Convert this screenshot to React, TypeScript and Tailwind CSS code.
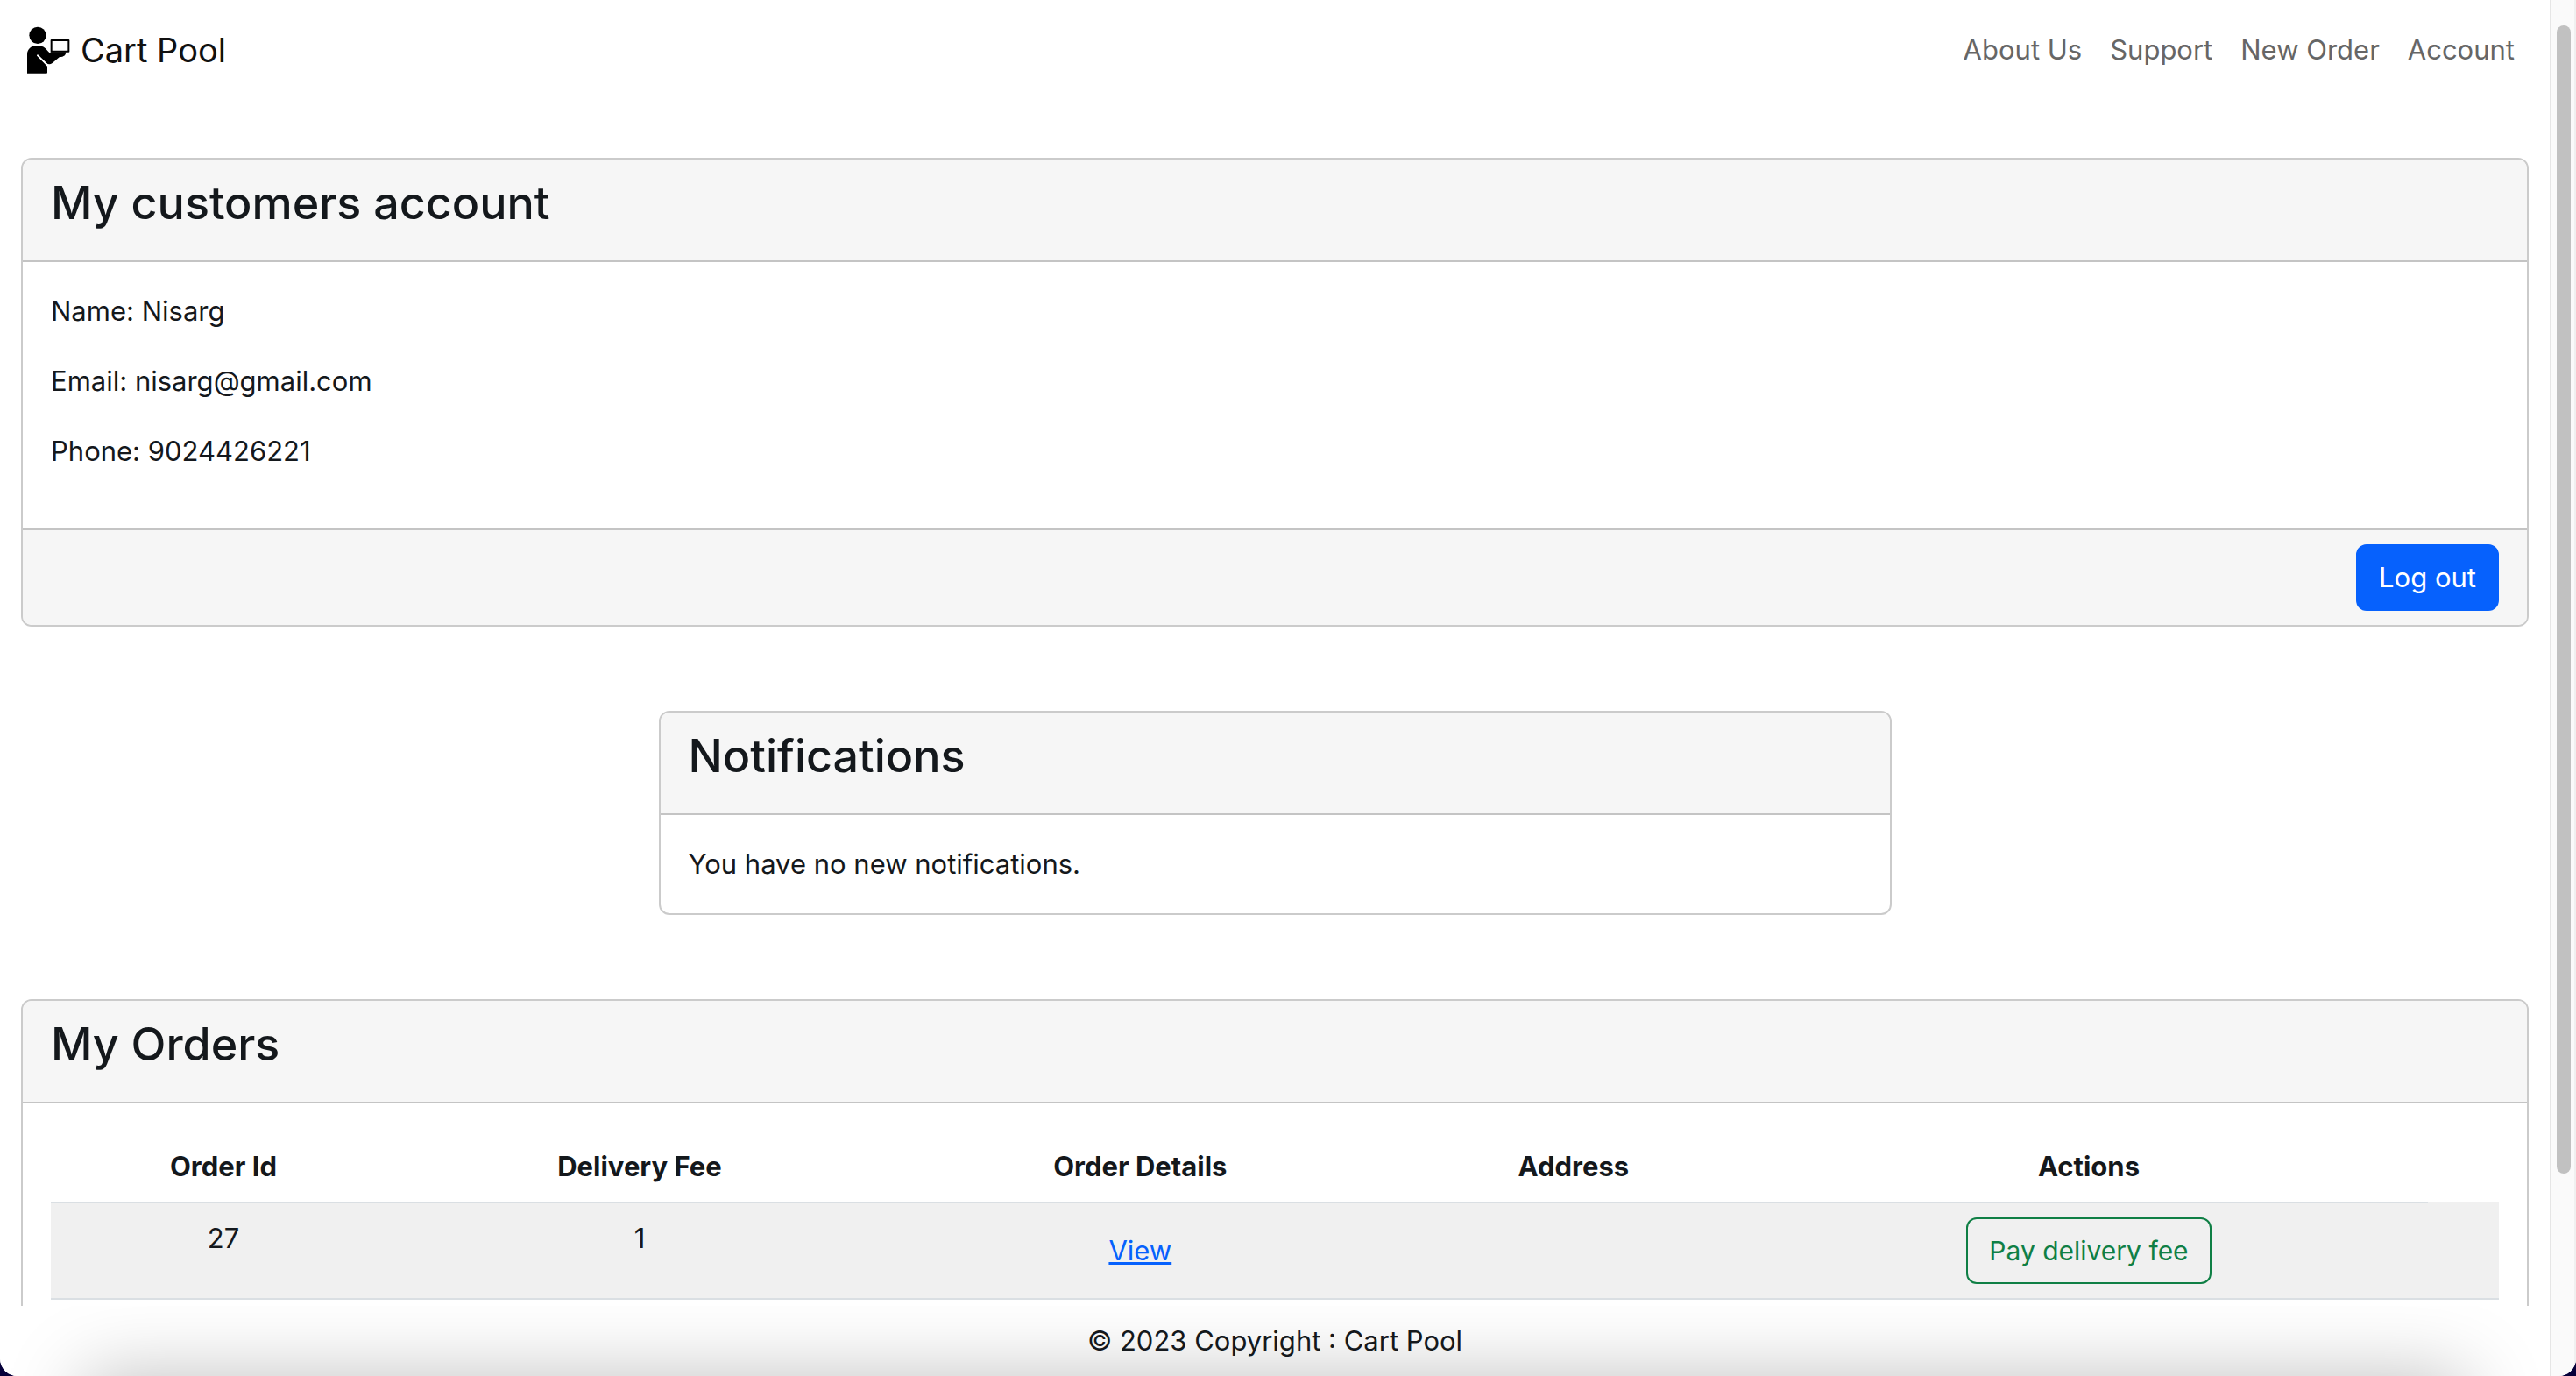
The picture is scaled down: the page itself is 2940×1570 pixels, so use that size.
import type { ReactNode } from "react";

const navLinks = ["About Us", "Support", "New Order", "Account"];

const profile = [
  { label: "Name", value: "Nisarg" },
  { label: "Email", value: "nisarg@gmail.com" },
  { label: "Phone", value: "9024426221" },
];

const orders = [{ id: 27, fee: 1, address: "" }];

function Logo() {
  return (
    <svg viewBox="0 0 147 162" className="h-[54px] w-[49px]" aria-hidden="true">
      <circle cx="36" cy="31" r="29" />
      <path d="M0 161V96C0 78 14 66 34 66C52 66 62 73 70 84L78 92H80V88H133C133 98 127 105 110 106L86 126C79 131 72 131 66 126L36 97L33 100L69 137V158Q69 161 66 161Z" />
      <path d="M36 100L70 133" stroke="white" strokeWidth="5" strokeLinecap="round" />
      <path d="M83 48H142V86H83Z" fill="white" stroke="black" strokeWidth="6" strokeLinejoin="round" />
    </svg>
  );
}

function Card({ title, children, footer }: { title: string; children: ReactNode; footer?: ReactNode }) {
  return (
    <section className="overflow-hidden rounded-xl border-2 border-[#cbcbcb] bg-white">
      <div className="border-b-2 border-[#c4c4c4] bg-[#f6f6f6] px-8 py-4">
        <h2 className="mb-4 text-[52px] leading-[67px] font-medium">{title}</h2>
      </div>
      <div className="p-8">{children}</div>
      {footer && (
        <div className="flex justify-end border-t-2 border-[#c4c4c4] bg-[#f6f6f6] px-8 py-4">{footer}</div>
      )}
    </section>
  );
}

function OrdersTable() {
  return (
    <table className="mb-8 w-full table-fixed border-collapse text-center">
      <colgroup>
        <col className="w-[14.1%]" />
        <col className="w-[19.9%]" />
        <col className="w-[21%]" />
        <col className="w-[14.4%]" />
        <col className="w-[27.7%]" />
        <col className="w-[2.9%]" />
      </colgroup>
      <thead>
        <tr>
          {["Order Id", "Delivery Fee", "Order Details", "Address", "Actions"].map((name) => (
            <th key={name} scope="col" className="border-b-2 border-[#dadfe3] p-4 font-bold">
              {name}
            </th>
          ))}
        </tr>
      </thead>
      <tbody>
        {orders.map((order) => (
          <tr key={order.id} className="bg-[#f0f0f0] align-top">
            <td className="border-b-2 border-[#dadfe3] p-4">{order.id}</td>
            <td className="border-b-2 border-[#dadfe3] p-4">{order.fee}</td>
            <td className="border-b-2 border-[#dadfe3] p-4">
              <a href="#order" className="inline-block py-[14px] text-[#0661fd] underline">
                View
              </a>
            </td>
            <td className="border-b-2 border-[#dadfe3] p-4">{order.address}</td>
            <td className="border-b-2 border-[#dadfe3] p-4">
              <button
                type="button"
                className="mx-auto block rounded-xl border-2 border-[#0f7f45] px-6 py-3 text-[30px] text-[#0f7f45]"
              >
                Pay delivery fee
              </button>
            </td>
            <td className="border-b-2 border-[#dadfe3]" />
          </tr>
        ))}
      </tbody>
    </table>
  );
}

export default function App() {
  return (
    <div className="h-screen bg-[#06003a] font-['Inter',sans-serif] text-[31px] leading-[48px] text-[#14181c]">
      <div className="flex h-full overflow-hidden rounded-b-[20px] bg-white">
        <div className="flex min-w-0 flex-1 flex-col">
          <div className="min-h-0 flex-1 overflow-hidden">
            <header className="flex h-[114px] items-center justify-between px-6">
              <a href="#home" className="flex items-center gap-3 pl-[7px] text-[38px] text-[#111]">
                <Logo />
                Cart Pool
              </a>
              <nav className="flex gap-8 pr-4 text-[#666]">
                {navLinks.map((link) => (
                  <a key={link} href="#nav">
                    {link}
                  </a>
                ))}
              </nav>
            </header>
            <main className="flex flex-col gap-24 px-6 pt-[66px]">
              <Card
                title="My customers account"
                footer={
                  <button
                    type="button"
                    className="rounded-xl border-2 border-[#0661fd] bg-[#0661fd] px-6 py-3 text-white"
                  >
                    Log out
                  </button>
                }
              >
                {profile.map((row) => (
                  <p key={row.label} className="mb-8">
                    {row.label}: {row.value}
                  </p>
                ))}
              </Card>
              <div className="mx-auto w-1/2 px-3">
                <Card title="Notifications">
                  <p>You have no new notifications.</p>
                </Card>
              </div>
              <Card title="My Orders">
                <OrdersTable />
              </Card>
            </main>
          </div>
          <footer className="relative overflow-hidden bg-white p-4 text-center">
            <div className="absolute inset-x-24 top-full h-40 shadow-[0_0_88px_rgba(0,0,0,0.25)]" />
            <p className="relative">© 2023 Copyright : Cart Pool</p>
          </footer>
        </div>
        <div className="w-[30px] border-r-2 border-l-2 border-r-[#f0f0f0] border-l-[#e6e6e6] bg-[#fafafa] px-[6px] pt-[29px]">
          <div className="h-[85%] w-4 rounded-full bg-[#c1c1c1]" />
        </div>
      </div>
    </div>
  );
}
